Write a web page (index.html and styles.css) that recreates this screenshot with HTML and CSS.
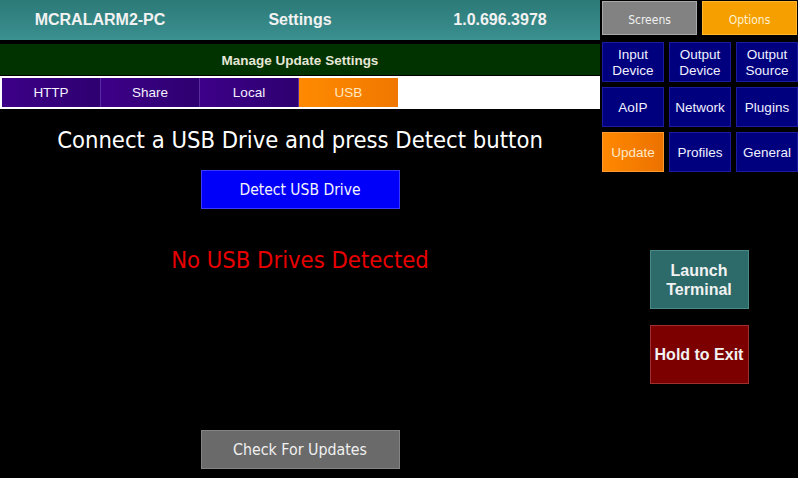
FILE: index.html
```html
<!DOCTYPE html>
<html>
<head>
<meta charset="utf-8">
<link rel="stylesheet" href="styles.css">
</head>
<body>
<div class="app">
  <div class="main">
    <div class="header">
      <div class="hcell">MCRALARM2-PC</div>
      <div class="hcell">Settings</div>
      <div class="hcell">1.0.696.3978</div>
    </div>
    <div class="subbar">Manage Update Settings</div>
    <div class="tabbar">
      <div class="tab">HTTP</div>
      <div class="tab">Share</div>
      <div class="tab">Local</div>
      <div class="tab tab-active">USB</div>
    </div>
    <div class="content">
      <div class="headline">Connect a USB Drive and press Detect button</div>
      <div class="btn btn-detect">Detect USB Drive</div>
      <div class="status">No USB Drives Detected</div>
      <div class="btn btn-check">Check For Updates</div>
    </div>
  </div>
  <div class="side">
    <div class="toprow">
      <div class="tbtn tbtn-screens">Screens</div>
      <div class="tbtn tbtn-options">Options</div>
    </div>
    <div class="grid">
      <div class="gbtn">Input<br>Device</div>
      <div class="gbtn">Output<br>Device</div>
      <div class="gbtn">Output<br>Source</div>
      <div class="gbtn">AoIP</div>
      <div class="gbtn">Network</div>
      <div class="gbtn">Plugins</div>
      <div class="gbtn gbtn-active">Update</div>
      <div class="gbtn">Profiles</div>
      <div class="gbtn">General</div>
    </div>
    <div class="action action-launch">Launch<br>Terminal</div>
    <div class="action action-exit">Hold to Exit</div>
  </div>
</div>
</body>
</html>
```

FILE: styles.css
```css
html, body {
  margin: 0;
  padding: 0;
  background: #000;
}
.app {
  width: 798px;
  height: 478px;
  display: flex;
  overflow: hidden;
  font-family: "Liberation Sans", Arial, sans-serif;
  color: #fff;
}
.main {
  width: 600px;
  display: flex;
  flex-direction: column;
}
.header {
  height: 40px;
  display: flex;
  background: linear-gradient(to bottom, #2c7a78, #3b9090);
}
.hcell {
  flex: 1;
  display: flex;
  align-items: center;
  justify-content: center;
  font-weight: bold;
  font-size: 16px;
  color: #f2f2f2;
}
.subbar {
  margin-top: 4px;
  height: 32px;
  background: #003300;
  display: flex;
  align-items: center;
  justify-content: center;
  padding-top: 1px;
  box-sizing: border-box;
  font-weight: bold;
  font-size: 13.5px;
  color: #e6e6d6;
  border-bottom: 1px solid #000;
}
.tabbar {
  height: 33px;
  background: #fff;
  padding: 2px 0 2px 2px;
  box-sizing: border-box;
  display: flex;
  align-items: stretch;
}
.tab {
  width: 99px;
  display: flex;
  align-items: center;
  justify-content: center;
  font-size: 13.5px;
  color: #f4f0ff;
  background: linear-gradient(to right, #3d0088, #2e0070);
  border-right: 1px solid #5a2aa0;
  box-sizing: border-box;
}
.tab-active {
  background: linear-gradient(to right, #ff8a00, #f07800);
  border-right: none;
  color: #ffe8c0;
}
.content {
  flex: 1;
  display: flex;
  flex-direction: column;
  align-items: center;
  font-family: "DejaVu Sans Condensed", "DejaVu Sans", sans-serif;
}
.headline {
  margin-top: 16px;
  height: 30px;
  line-height: 30px;
  font-size: 23.6px;
  color: #fff;
  white-space: nowrap;
}
.btn {
  width: 199px;
  height: 39px;
  box-sizing: border-box;
  display: flex;
  align-items: center;
  justify-content: center;
  font-size: 15.5px;
}
.btn-detect {
  margin-top: 15px;
  background: #0000fa;
  border: 1px solid #3a3aff;
  color: #f4f4ff;
}
.status {
  margin-top: 36px;
  height: 30px;
  line-height: 30px;
  font-size: 23.6px;
  color: #e80000;
  white-space: nowrap;
}
.btn-check {
  margin-top: 155px;
  background: #6a6a6a;
  border: 1px solid #848484;
  color: #f0f0f0;
  font-size: 15.8px;
}
.side {
  width: 198px;
  padding: 1px 0 0 2px;
  box-sizing: border-box;
  display: flex;
  flex-direction: column;
  align-items: flex-start;
}
.toprow {
  display: flex;
  gap: 5px;
}
.tbtn {
  width: 95px;
  height: 34px;
  padding-top: 3px;
  box-sizing: border-box;
  display: flex;
  align-items: center;
  justify-content: center;
  font-family: "DejaVu Sans Condensed", "DejaVu Sans", sans-serif;
  font-size: 12px;
}
.tbtn-screens {
  background: #828282;
  border: 1px solid #a8a8a8;
  color: #f0f0f0;
}
.tbtn-options {
  background: #f5a000;
  border: 1px solid #ffb830;
  color: #fff0d0;
}
.grid {
  margin-top: 7px;
  display: grid;
  grid-template-columns: 62px 62px 62px;
  grid-auto-rows: 40px;
  gap: 5px;
}
.gbtn {
  background: #00007e;
  border: 1px solid #1c1ca0;
  box-sizing: border-box;
  padding-top: 2px;
  display: flex;
  align-items: center;
  justify-content: center;
  text-align: center;
  font-size: 13.5px;
  line-height: 16px;
  color: #f0f0ff;
}
.gbtn-active {
  background: linear-gradient(to right, #ff8800, #ec7200);
  border-color: #ff9a30;
  color: #ffe8c8;
}
.action {
  align-self: center;
  margin-left: -2px;
  width: 99px;
  height: 59px;
  box-sizing: border-box;
  display: flex;
  align-items: center;
  justify-content: center;
  text-align: center;
  font-weight: bold;
  font-size: 16px;
  line-height: 19px;
  color: #f2f2f2;
}
.action-launch {
  margin-top: 78px;
  background: #2d6a6a;
  border: 1px solid #4a8a88;
}
.action-exit {
  margin-top: 16px;
  background: #7c0000;
  border: 1px solid #a03030;
}
```
